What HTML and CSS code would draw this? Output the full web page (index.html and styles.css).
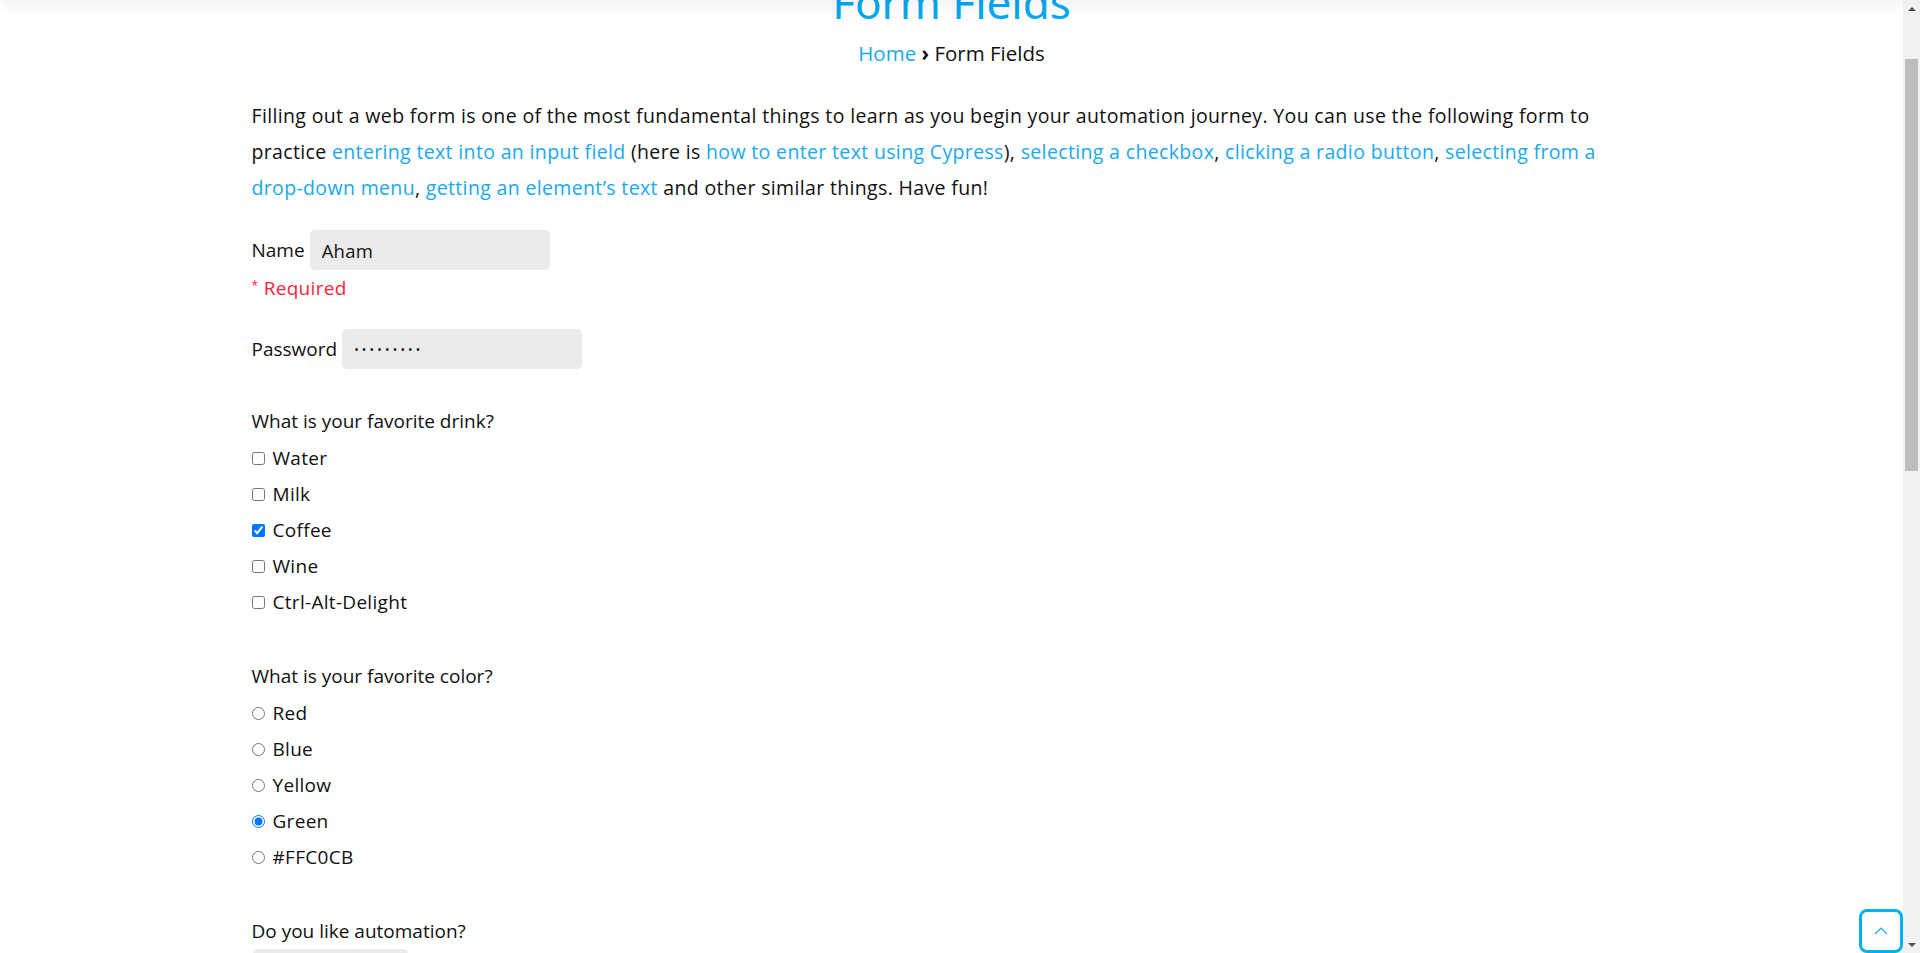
FILE: index.html
```html
<!DOCTYPE html>
<html lang="en">
<head>
<meta charset="utf-8">
<title>Form Fields</title>
<link rel="stylesheet" href="styles.css">
</head>
<body>
<div class="viewport">
  <div class="top-shadow"></div>
  <main class="container">
    <h1 class="title">Form Fields</h1>
    <nav class="crumbs"><a href="#" class="link">Home</a> <span class="sep">›</span> Form Fields</nav>
    <p class="intro">Filling out a web form is one of the most fundamental things to learn as you begin your automation journey. You can use the following form to practice <a href="#" class="link">entering text into an input field</a> (here is <a href="#" class="link">how to enter text using Cypress</a>), <a href="#" class="link">selecting a checkbox</a>, <a href="#" class="link">clicking a radio button</a>, <a href="#" class="link">selecting from a drop-down menu</a>, <a href="#" class="link">getting an element’s text</a> and other similar things. Have fun!</p>
    <form class="form">
      <div class="field field-name">
        <label class="inline-label">Name <input class="text-input" type="text" value="Aham"></label>
        <div class="required"><span class="star">*</span> Required</div>
      </div>
      <div class="field field-pass">
        <label class="inline-label">Password <input class="text-input pass-input" type="password" value="password1"></label>
      </div>
      <div class="group group-drink">
        <div class="question">What is your favorite drink?</div>
        <label class="option"><input type="checkbox" class="box">Water</label>
        <label class="option"><input type="checkbox" class="box">Milk</label>
        <label class="option"><input type="checkbox" class="box" checked>Coffee</label>
        <label class="option"><input type="checkbox" class="box">Wine</label>
        <label class="option"><input type="checkbox" class="box">Ctrl-Alt-Delight</label>
      </div>
      <div class="group group-color">
        <div class="question">What is your favorite color?</div>
        <label class="option"><input type="radio" name="color" class="box">Red</label>
        <label class="option"><input type="radio" name="color" class="box">Blue</label>
        <label class="option"><input type="radio" name="color" class="box">Yellow</label>
        <label class="option"><input type="radio" name="color" class="box" checked>Green</label>
        <label class="option"><input type="radio" name="color" class="box">#FFC0CB</label>
      </div>
      <div class="group group-auto">
        <div class="question question-tight">Do you like automation?</div>
        <select class="select"><option></option></select>
      </div>
    </form>
  </main>
  <button class="to-top" type="button" aria-label="Back to top">
    <svg width="14" height="8" viewBox="0 0 14 8"><path d="M1 7 L7 1.2 L13 7" fill="none" stroke="#29b6f0" stroke-width="1.3"/></svg>
  </button>
</div>
<div class="scrollbar">
  <div class="sb-arrow"><span class="tri-up"></span></div>
  <div class="sb-track"><div class="sb-thumb"></div></div>
  <div class="sb-arrow"><span class="tri-down"></span></div>
</div>
</body>
</html>
```
FILE: styles.css
```css
html, body {
  margin: 0;
  height: 100%;
  overflow: hidden;
}
body {
  display: flex;
  background: #fff;
  font-family: "Open Sans", "Liberation Sans", sans-serif;
  color: #111;
}
.viewport {
  flex: 1;
  position: relative;
  overflow: hidden;
}
.top-shadow {
  position: absolute;
  top: -12px;
  left: 0;
  right: 0;
  height: 12px;
  box-shadow: 0 2px 18px rgba(0, 0, 0, 0.09);
}
.container {
  width: 1400px;
  margin: 0 auto;
}
.title {
  margin: -24px 0 0;
  font-family: "Noto Sans", "Open Sans", sans-serif;
  font-weight: 400;
  font-size: 44px;
  line-height: 52px;
  color: #00a8ef;
  text-align: center;
}
.crumbs {
  margin-top: 11px;
  font-size: 20.5px;
  line-height: 28px;
  text-align: center;
  color: #111;
}
.sep {
  font-weight: 700;
}
.link {
  color: #18a9ef;
  text-decoration: none;
}
.intro {
  margin: 31px 0 0;
  font-size: 19.5px;
  letter-spacing: 0.35px;
  line-height: 36px;
}
.form {
  margin-top: 24px;
  font-size: 19px;
}
.inline-label {
  display: flex;
  align-items: center;
  gap: 5px;
  height: 40px;
}
.text-input {
  width: 240px;
  height: 40px;
  box-sizing: border-box;
  border: none;
  border-radius: 5px;
  background: #ebebeb;
  padding: 0 12px;
  font-family: inherit;
  font-size: 18.5px;
  letter-spacing: 0.3px;
  color: #111;
  outline: none;
}
.pass-input {
  padding: 0 12px;
  font-size: 12px;
  letter-spacing: 3.2px;
}
.required {
  color: #ff1f3d;
  line-height: 28px;
  height: 28px;
  margin-top: 4px;
  letter-spacing: 0.3px;
}
.star {
  font-size: 12px;
  line-height: 0;
  vertical-align: 5px;
}
.field-pass {
  margin-top: 27px;
}
.group-drink {
  margin-top: 34px;
}
.group-color,
.group-auto {
  margin-top: 38px;
}
.question {
  line-height: 36px;
  margin-bottom: 1px;
}
.question-tight {
  margin-bottom: 0;
}
.option {
  display: flex;
  align-items: center;
  height: 36px;
  letter-spacing: 0.3px;
}
.box {
  width: 13px;
  height: 13px;
  margin: 0 8px 0 0;
}
.select {
  display: block;
  width: 155px;
  height: 40px;
  border: none;
  border-radius: 5px;
  background: #ebebeb;
  margin-left: 1px;
}
.to-top {
  position: absolute;
  right: 0;
  bottom: 0;
  width: 44px;
  height: 44px;
  box-sizing: border-box;
  border: 3px solid #00b2f0;
  border-radius: 8px;
  background: #fff;
  padding: 0;
  display: flex;
  align-items: center;
  justify-content: center;
}
.scrollbar {
  width: 17px;
  background: #f1f1f1;
  display: flex;
  flex-direction: column;
}
.sb-arrow {
  height: 17px;
  display: flex;
  align-items: center;
  justify-content: center;
}
.tri-up {
  width: 0;
  height: 0;
  border-left: 4px solid transparent;
  border-right: 4px solid transparent;
  border-bottom: 4px solid #505050;
}
.tri-down {
  width: 0;
  height: 0;
  border-left: 4px solid transparent;
  border-right: 4px solid transparent;
  border-top: 4px solid #505050;
}
.sb-track {
  flex: 1;
  padding: 42px 2px 0;
}
.sb-thumb {
  height: 412px;
  background: #bdbdbd;
}
```
